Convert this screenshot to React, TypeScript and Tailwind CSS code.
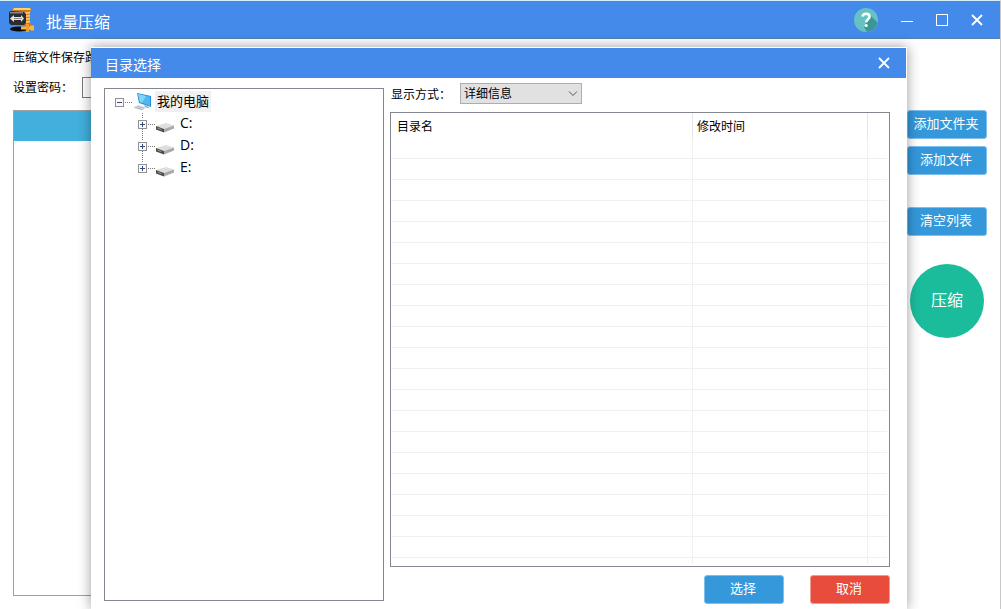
import React, { useState } from "react";

const drives = ["C:", "D:", "E:"];
const emptyRows = Array.from({ length: 20 }, (_, i) => i);

function AppLogo() {
  return (
    <svg width="26" height="24" viewBox="0 0 26 24" aria-hidden="true">
      <ellipse cx="10" cy="21" rx="9" ry="2.500" fill="#0d0d0d" />
      <path d="M4 0h17l2 1.500-1 2.500h-1.500v11H22l1 3H5l-1-2 3-2V5L3 3z" fill="#c9781f" />
      <path d="M5 0h16l1 2H4z" fill="#ffcf70" />
      <path d="M15 4.500l6-1v2l-5 1zM15 7.500l6-1v2l-5 1zM15 10.500l6-1v2l-5 1zM15 13.500l6-1v2l-5 1z" fill="#ffc35a" />
      <path d="M0 4l2-1 13 1 2 2v9l-2 2H2l-2-2z" fill="#2b2b30" />
      <path d="M1 4h13v1.500H1z" fill="#85858b" />
      <path d="M1 10.500l4-3.500v2h7V7l3 3.500-3 3.500v-2H5v2z" fill="#e2e2e2" />
      <path d="M5 10h8v1H5z" fill="#8d8d8d" />
      <path d="M12 18.500h9l1-1h3v5h-3l-1-1h-9z" fill="#ffb52e" />
      <path d="M17 16h3v8h-3z" fill="#f0a028" />
    </svg>
  );
}

function HelpIcon() {
  return (
    <svg width="24" height="24" viewBox="0 0 24 24" aria-hidden="true">
      <circle cx="12" cy="12" r="12" fill="#66c2c2" />
      <path d="M15 6l8.500 8.500A12 12 0 0 1 13 24l-3-5 3-5z" fill="#3d9696" />
      <path d="M8.500 8.500c.5-2 2-2.700 3.500-2.700 2 0 3.500 1 3.500 2.900 0 2.600-3.200 2.600-3.200 5.500" fill="none" stroke="#fff" strokeWidth="2.600" />
      <circle cx="12.200" cy="17.500" r="1.600" fill="#fff" />
    </svg>
  );
}

function CloseIcon() {
  return (
    <svg width="12" height="12" viewBox="0 0 12 12" aria-hidden="true">
      <path d="M1 1l10 10M11 1L1 11" stroke="#fff" strokeWidth="1.800" />
    </svg>
  );
}

function ComputerIcon() {
  return (
    <svg width="20" height="18" viewBox="0 0 20 18" aria-hidden="true">
      <path d="M4 0l14 3v11L6 10z" fill="#1f8fd6" />
      <path d="M5 1l12 2.800v9L7 9.300z" fill="#4fb8f2" />
      <path d="M5 1l8 2-4 6.800-2-.5z" fill="#86d3fa" />
      <path d="M11 11.500l3 1 3 3-5-1z" fill="#aeb6bd" />
      <path d="M0 14.500l5-2.500 8 2.500L9 17.500z" fill="#d5dade" />
      <path d="M2 14.500l7 2M4 13.300l7 2" stroke="#9aa3ab" strokeWidth=".6" />
    </svg>
  );
}

function DriveIcon() {
  return (
    <svg width="20" height="12" viewBox="0 0 20 12" aria-hidden="true">
      <path d="M0 5l10-3 8 2.500L8 8z" fill="#dedede" />
      <path d="M0 5l8 3v3.500L0 8.500z" fill="#4a4a4a" />
      <path d="M8 8l10-3.500v3L8 11.500z" fill="#a9a9a9" />
      <path d="M1.500 7l4 1.600" stroke="#9c9c9c" />
    </svg>
  );
}

function Expander({ open, child, last }: { open?: boolean; child?: boolean; last?: boolean }) {
  return (
    <svg width="18" height="22" viewBox="0 0 18 22" aria-hidden="true">
      {child && <path d="M4.500 0v6" stroke="#777" strokeDasharray="1 1" />}
      {child && !last && <path d="M4.500 16v6" stroke="#777" strokeDasharray="1 1" />}
      <path d="M10 11.500h8" stroke="#777" strokeDasharray="1 1" />
      <rect x=".5" y="7.500" width="8" height="8" fill="#fafafa" stroke="#919191" />
      <path d="M2 11.500h5" stroke="#35477d" />
      {!open && <path d="M4.500 9v5" stroke="#35477d" />}
    </svg>
  );
}

function SideButton({ children }: { children: React.ReactNode }) {
  return (
    <button className="h-[29px] w-20 shrink-0 rounded-[3px] border border-[#7fbfec] bg-[#3498db] pr-0.5 pb-1 text-[13px] leading-6 text-white">
      {children}
    </button>
  );
}

function FolderDialog() {
  const [mode, setMode] = useState("detail");
  const [expanded, setExpanded] = useState(true);

  return (
    <div
      role="dialog"
      aria-label="目录选择"
      className="absolute top-[46px] right-[93px] bottom-0 left-[91px] flex flex-col border-t border-r border-white bg-white shadow-[0_0_12px_rgba(0,0,0,0.4)]"
    >
      <div className="flex h-[30px] shrink-0 items-center justify-between bg-[#438aeb] pr-4 pl-3.5 text-sm text-white">
        <h2 className="pt-0.5">目录选择</h2>
        <button aria-label="关闭">
          <CloseIcon />
        </button>
      </div>

      <div className="flex min-h-0 flex-1 gap-1.5 pr-4 pl-[13px]">
        {/* Directory tree */}
        <div className="mt-2.5 mb-2 w-[280px] shrink-0 border border-[#828790] pt-0.5 pl-2.5 text-[13px]">
          <div className="flex h-[22px] items-center">
            <button aria-label="展开" aria-expanded={expanded} onClick={() => setExpanded(!expanded)}>
              <Expander open={expanded} />
            </button>
            <ComputerIcon />
            <span className="mb-0.5 ml-0.5 h-[21px] bg-[#f0f0f0] px-0.5 leading-5">我的电脑</span>
          </div>
          {expanded && (
            <ul className="pl-[23px]">
              {drives.map((drive, i) => (
                <li key={drive} className="flex h-[22px] items-center">
                  <button aria-label={drive}>
                    <Expander child last={i === drives.length - 1} />
                  </button>
                  <span className="pt-1.5">
                    <DriveIcon />
                  </span>
                  <span className="ml-1 pb-0.5 font-['Open_Sans',sans-serif] text-sm">{drive}</span>
                </li>
              ))}
            </ul>
          )}
        </div>

        {/* Directory contents */}
        <div className="flex min-w-0 flex-1 flex-col">
          <div className="flex h-[34px] shrink-0 items-center pl-px text-xs">
            <label htmlFor="mode" className="w-[69px] pb-0.5">
              显示方式：
            </label>
            <div className="relative mb-1">
              <select
                id="mode"
                value={mode}
                onChange={(e) => setMode(e.target.value)}
                className="block h-[21px] w-[122px] appearance-none border border-[#adadad] bg-[#e1e1e1] pl-[3px] text-xs leading-4"
              >
                <option value="detail">详细信息</option>
                <option value="list">列表</option>
              </select>
              <svg className="pointer-events-none absolute top-2 right-1" width="10" height="6" viewBox="0 0 10 6" aria-hidden="true">
                <path d="M1 .5l4 4 4-4" fill="none" stroke="#555" />
              </svg>
            </div>
          </div>

          <div className="min-h-0 flex-1 overflow-hidden border border-[#828790] pr-0.5 pb-0.5">
            <table className="w-full table-fixed border-separate border-spacing-0 text-left text-xs">
              <thead>
                <tr className="h-[25px]">
                  <th className="w-[302px] border-r border-[#e5e5e5] p-0 pl-1.5 font-normal">目录名</th>
                  <th className="w-[175px] border-r border-[#e5e5e5] p-0 pl-1 font-normal">修改时间</th>
                  <th className="p-0"></th>
                </tr>
              </thead>
              <tbody>
                {emptyRows.map((row) => (
                  <tr key={row} className="h-[21px]">
                    <td className="border-r border-b border-[#f0f0f0] p-0"></td>
                    <td className="border-r border-b border-[#f0f0f0] p-0"></td>
                    <td className="border-b border-[#f0f0f0] p-0"></td>
                  </tr>
                ))}
                <tr className="h-1.5">
                  <td className="border-r border-[#f0f0f0] p-0"></td>
                  <td className="border-r border-[#f0f0f0] p-0"></td>
                  <td className="p-0"></td>
                </tr>
              </tbody>
            </table>
          </div>

          <div className="flex shrink-0 justify-end gap-[26px] pt-2 pb-[5px] text-[13px] leading-6 text-white">
            <button className="h-[29px] w-20 rounded-[3px] border border-[#7fbfec] bg-[#3498db] pr-0.5 pb-1">选择</button>
            <button className="h-[29px] w-20 rounded-[3px] border border-[#f09a90] bg-[#e74c3c] pr-0.5 pb-1">取消</button>
          </div>
        </div>
      </div>
    </div>
  );
}

export default function App() {
  return (
    <div className="relative flex h-screen flex-col overflow-hidden border-t border-r border-t-[#d5effa] border-r-[#c8c8c8] bg-white font-['Noto_Sans_CJK_SC',sans-serif] text-black">
      <header className="flex h-[38px] shrink-0 items-center border-b border-[#5580b8] bg-[#438aeb] pr-[17px] pl-[9px] text-white">
        <AppLogo />
        <h1 className="ml-[11px] flex-1 pt-0.5 text-base">批量压缩</h1>
        <div className="flex items-center gap-[23px]">
          <button aria-label="帮助">
            <HelpIcon />
          </button>
          <button aria-label="最小化">
            <svg width="12" height="12" viewBox="0 0 12 12" aria-hidden="true">
              <path d="M0 7.500h12" stroke="#fff" />
            </svg>
          </button>
          <button aria-label="最大化">
            <svg width="12" height="12" viewBox="0 0 12 12" aria-hidden="true">
              <rect x=".5" y=".5" width="11" height="11" fill="none" stroke="#fff" />
            </svg>
          </button>
          <button aria-label="关闭">
            <CloseIcon />
          </button>
        </div>
      </header>

      <main className="flex min-h-0 flex-1 flex-col px-[13px] pt-2 pb-[13px]">
        <div className="flex h-5 items-center text-xs">
          <label htmlFor="path" className="w-[78px] overflow-hidden whitespace-nowrap">
            压缩文件保存路径：
          </label>
          <input id="path" className="h-4 w-[400px] border border-[#7a7a7a]" />
        </div>
        <div className="mt-2.5 flex h-5 items-center text-xs">
          <label htmlFor="password" className="w-[69px]">
            设置密码：
          </label>
          <input id="password" type="password" className="h-[21px] w-[160px] border border-[#7a7a7a]" />
        </div>
        <div className="mt-[13px] flex min-h-0 flex-1 gap-2.5">
          <div className="flex-1 border border-[#a0a0a0]">
            <div className="h-[30px] bg-[#41b0dc]"></div>
          </div>
          <div className="flex w-20 flex-col items-center">
            <div className="flex flex-col gap-[7px]">
              <SideButton>添加文件夹</SideButton>
              <SideButton>添加文件</SideButton>
            </div>
            <div className="mt-8 mb-7 flex">
              <SideButton>清空列表</SideButton>
            </div>
            <button className="size-[74px] shrink-0 rounded-full bg-[#1abc9c] pb-1 text-base text-white">压缩</button>
          </div>
        </div>
      </main>

      <FolderDialog />
    </div>
  );
}
